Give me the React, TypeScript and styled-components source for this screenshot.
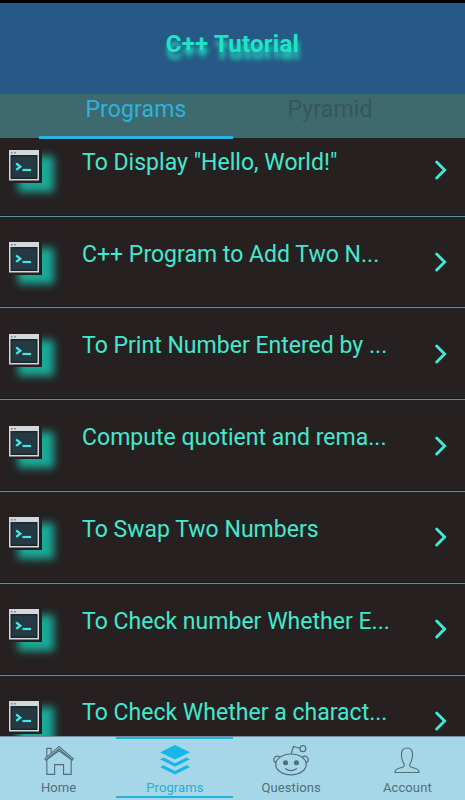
import React from 'react';
import styled, { createGlobalStyle } from 'styled-components';

const GlobalStyle = createGlobalStyle`
  *, *::before, *::after { box-sizing: border-box; }
  body { margin: 0; background: #262021; font-family: Roboto, "Liberation Sans", sans-serif; }
`;

const Screen = styled.div`
  width: 465px;
  height: 800px;
  display: flex;
  flex-direction: column;
  overflow: hidden;
  background: #262021;
  border-top: 3px solid #000;
`;

const Header = styled.header`
  flex: 0 0 91px;
  display: flex;
  justify-content: center;
  padding-top: 26px;
  background: #265985;
`;

const Title = styled.h1`
  margin: 0;
  font-size: 24px;
  line-height: 30px;
  font-weight: 700;
  letter-spacing: 0.25px;
  color: #1de5c7;
  text-shadow: 1px 7px 5px #1de5c7;
`;

const Tabs = styled.nav`
  flex: 0 0 44px;
  min-height: 0;
  display: flex;
  padding: 0 38px 0 39px;
  background: #3e696e;
`;

const Tab = styled.div<{ $active?: boolean }>`
  flex: 1;
  height: 45px;
  padding-top: 1px;
  text-align: center;
  font-size: 23px;
  line-height: 29px;
  letter-spacing: 0.15px;
  color: ${p => (p.$active ? '#2bb4df' : '#36565d')};
  border-bottom: 3px solid ${p => (p.$active ? '#2bb4df' : 'transparent')};
  position: relative;
`;

const Viewport = styled.main`
  flex: 1;
  min-height: 0;
  overflow: hidden;
`;

const List = styled.div`
  margin-top: -13.2px;
`;

const Row = styled.div`
  height: 91.8px;
  display: grid;
  grid-template-columns: 36px minmax(0, 1fr) 14px;
  column-gap: 40px;
  padding: 22.3px 17px 0 6px;
  border-bottom: 1px solid #5795a0;
  box-shadow: inset 0 -1px #14191f, 0 1px #192026;
`;

const IconTile = styled.div`
  width: 36px;
  height: 36px;
  padding: 3px 0 0 3px;
  background: #262021;
  box-shadow: 12px 9px 8px #1aaa98;
  svg { display: block; }
`;

const Label = styled.div`
  padding-top: 0.6px;
  font-size: 23px;
  line-height: 29px;
  letter-spacing: 0.02px;
  color: #43e8cf;
  white-space: nowrap;
`;

const Arrow = styled.div`
  padding-top: 13px;
  svg { display: block; }
`;

const BottomBar = styled.footer`
  flex: 0 0 64px;
  display: grid;
  grid-template-columns: repeat(4, 1fr);
  background: #a5d7e8;
  border-top: 1px solid #708f99;
`;

const NavItem = styled.div<{ $active?: boolean }>`
  display: flex;
  flex-direction: column;
  align-items: center;
  height: 61px;
  padding: 4px 0 0 1px;
  border-top: 2px solid ${p => (p.$active ? '#26b1e0' : 'transparent')};
  border-bottom: 2px solid ${p => (p.$active ? '#26b1e0' : 'transparent')};
  color: ${p => (p.$active ? '#26addc' : '#546d77')};
  font-size: 13px;
  line-height: 16px;
  letter-spacing: 0.1px;
  svg { display: block; margin-bottom: 2px; }
`;

const Terminal = () => (
  <svg width="30" height="31" viewBox="0 0 30 31">
    <rect x="0" y="0" width="30" height="30.5" fill="#d3d8dd" />
    <rect x="1.5" y="5" width="27" height="24" fill="#1a2830" />
    <rect x="3" y="6.5" width="24" height="21" fill="#263842" />
    <circle cx="2.8" cy="2.8" r="1" fill="#8b8f94" />
    <circle cx="6" cy="2.8" r="1" fill="#8b8f94" />
    <path d="M7.2 13.5 L11.3 16.7 L7.2 19.9" fill="none" stroke="#45e5e5" strokeWidth="2.3" />
    <path d="M13.5 20 H22" stroke="#45e5e5" strokeWidth="2.2" />
  </svg>
);

const Chevron = () => (
  <svg width="14" height="20" viewBox="0 0 14 20">
    <path d="M2.7 2 L10.6 10 L2.7 18" fill="none" stroke="#43e8d4" strokeWidth="2.9" strokeLinecap="round" />
  </svg>
);

const HomeIcon = () => (
  <svg width="38" height="36" viewBox="0 0 38 36" fill="none" stroke="currentColor" strokeWidth="1.15">
    <path d="M4.5 16.4 L19 3.5 L33.7 16.4 L32.7 17.7 L19 5.9 L5.5 17.7 Z" />
    <path d="M6.5 17 V32.3 H14.5 V22.3 H23.7 V32.3 H31.5 V17 M6.5 17 L19 8 L31.5 17 M6.5 14.5 V5.5 H10.9 V10.6" />
  </svg>
);

const LayersIcon = () => (
  <svg width="38" height="36" viewBox="0 0 38 36" fill="#16b6ea">
    <path d="M19 2 L34.4 9.4 L19 17 L3.6 9.4 Z" />
    <path d="M3.6 16.7 L7.2 15 L19 20.8 L30.8 15 L34.4 16.7 L19 24.5 Z" />
    <path d="M3.6 24.7 L7.2 23 L19 28.8 L30.8 23 L34.4 24.7 L19 32.5 Z" />
  </svg>
);

const AlienIcon = () => (
  <svg width="38" height="36" viewBox="0 0 38 36" fill="none" stroke="currentColor" strokeWidth="1.25">
    <ellipse cx="19" cy="22" rx="15.7" ry="10.7" />
    <path d="M7.4 14.5 C4 12 .7 15 1.3 18 Q1.8 20 3.7 20.4 M30.6 14.5 C34 12 37.3 15 36.7 18 Q36.2 20 34.3 20.4" />
    <path d="M19.2 11 L21.5 3.6 L28.3 5.4" />
    <circle cx="31.2" cy="5.8" r="3" />
    <circle cx="13.4" cy="20.4" r="2.6" fill="currentColor" stroke="none" />
    <circle cx="24.6" cy="20.4" r="2.6" fill="currentColor" stroke="none" />
    <path d="M13 26.2 Q19 30.6 25 26.2" />
  </svg>
);

const PersonIcon = () => (
  <svg width="38" height="36" viewBox="0 0 38 36" fill="none" stroke="currentColor" strokeWidth="1.15" strokeLinejoin="round">
    <path d="M6.6 30.3 C6.8 27.3 8 26.7 10.8 26 L15 24.7 C16.2 24.1 16.2 22 15.6 20.6 C14 18.5 13.4 15.5 13.3 11.5 C13.2 7.2 15.2 5.2 19 5.2 C22.8 5.2 24.8 7.2 24.7 11.5 C24.6 15.5 24 18.5 22.4 20.6 C21.8 22 21.8 24.1 23 24.7 L27.2 26 C30 26.7 31.2 27.3 31.4 30.3 Z" />
  </svg>
);

const programs = [
  'To Display "Hello, World!"',
  'C++ Program to Add Two N...',
  'To Print Number Entered by ...',
  'Compute quotient and rema...',
  'To Swap Two Numbers',
  'To Check number Whether E...',
  'To Check Whether a charact...',
];

const navItems = [
  { label: 'Home', Icon: HomeIcon },
  { label: 'Programs', Icon: LayersIcon, active: true },
  { label: 'Questions', Icon: AlienIcon },
  { label: 'Account', Icon: PersonIcon },
];

export default function App() {
  return (
    <>
      <GlobalStyle />
      <Screen>
        <Header><Title>C++ Tutorial</Title></Header>
        <Tabs>
          <Tab $active>Programs</Tab>
          <Tab>Pyramid</Tab>
        </Tabs>
        <Viewport>
          <List>
            {programs.map(name => (
              <Row key={name}>
                <IconTile><Terminal /></IconTile>
                <Label>{name}</Label>
                <Arrow><Chevron /></Arrow>
              </Row>
            ))}
          </List>
        </Viewport>
        <BottomBar>
          {navItems.map(({ label, Icon, active }) => (
            <NavItem key={label} $active={active}><Icon />{label}</NavItem>
          ))}
        </BottomBar>
      </Screen>
    </>
  );
}
